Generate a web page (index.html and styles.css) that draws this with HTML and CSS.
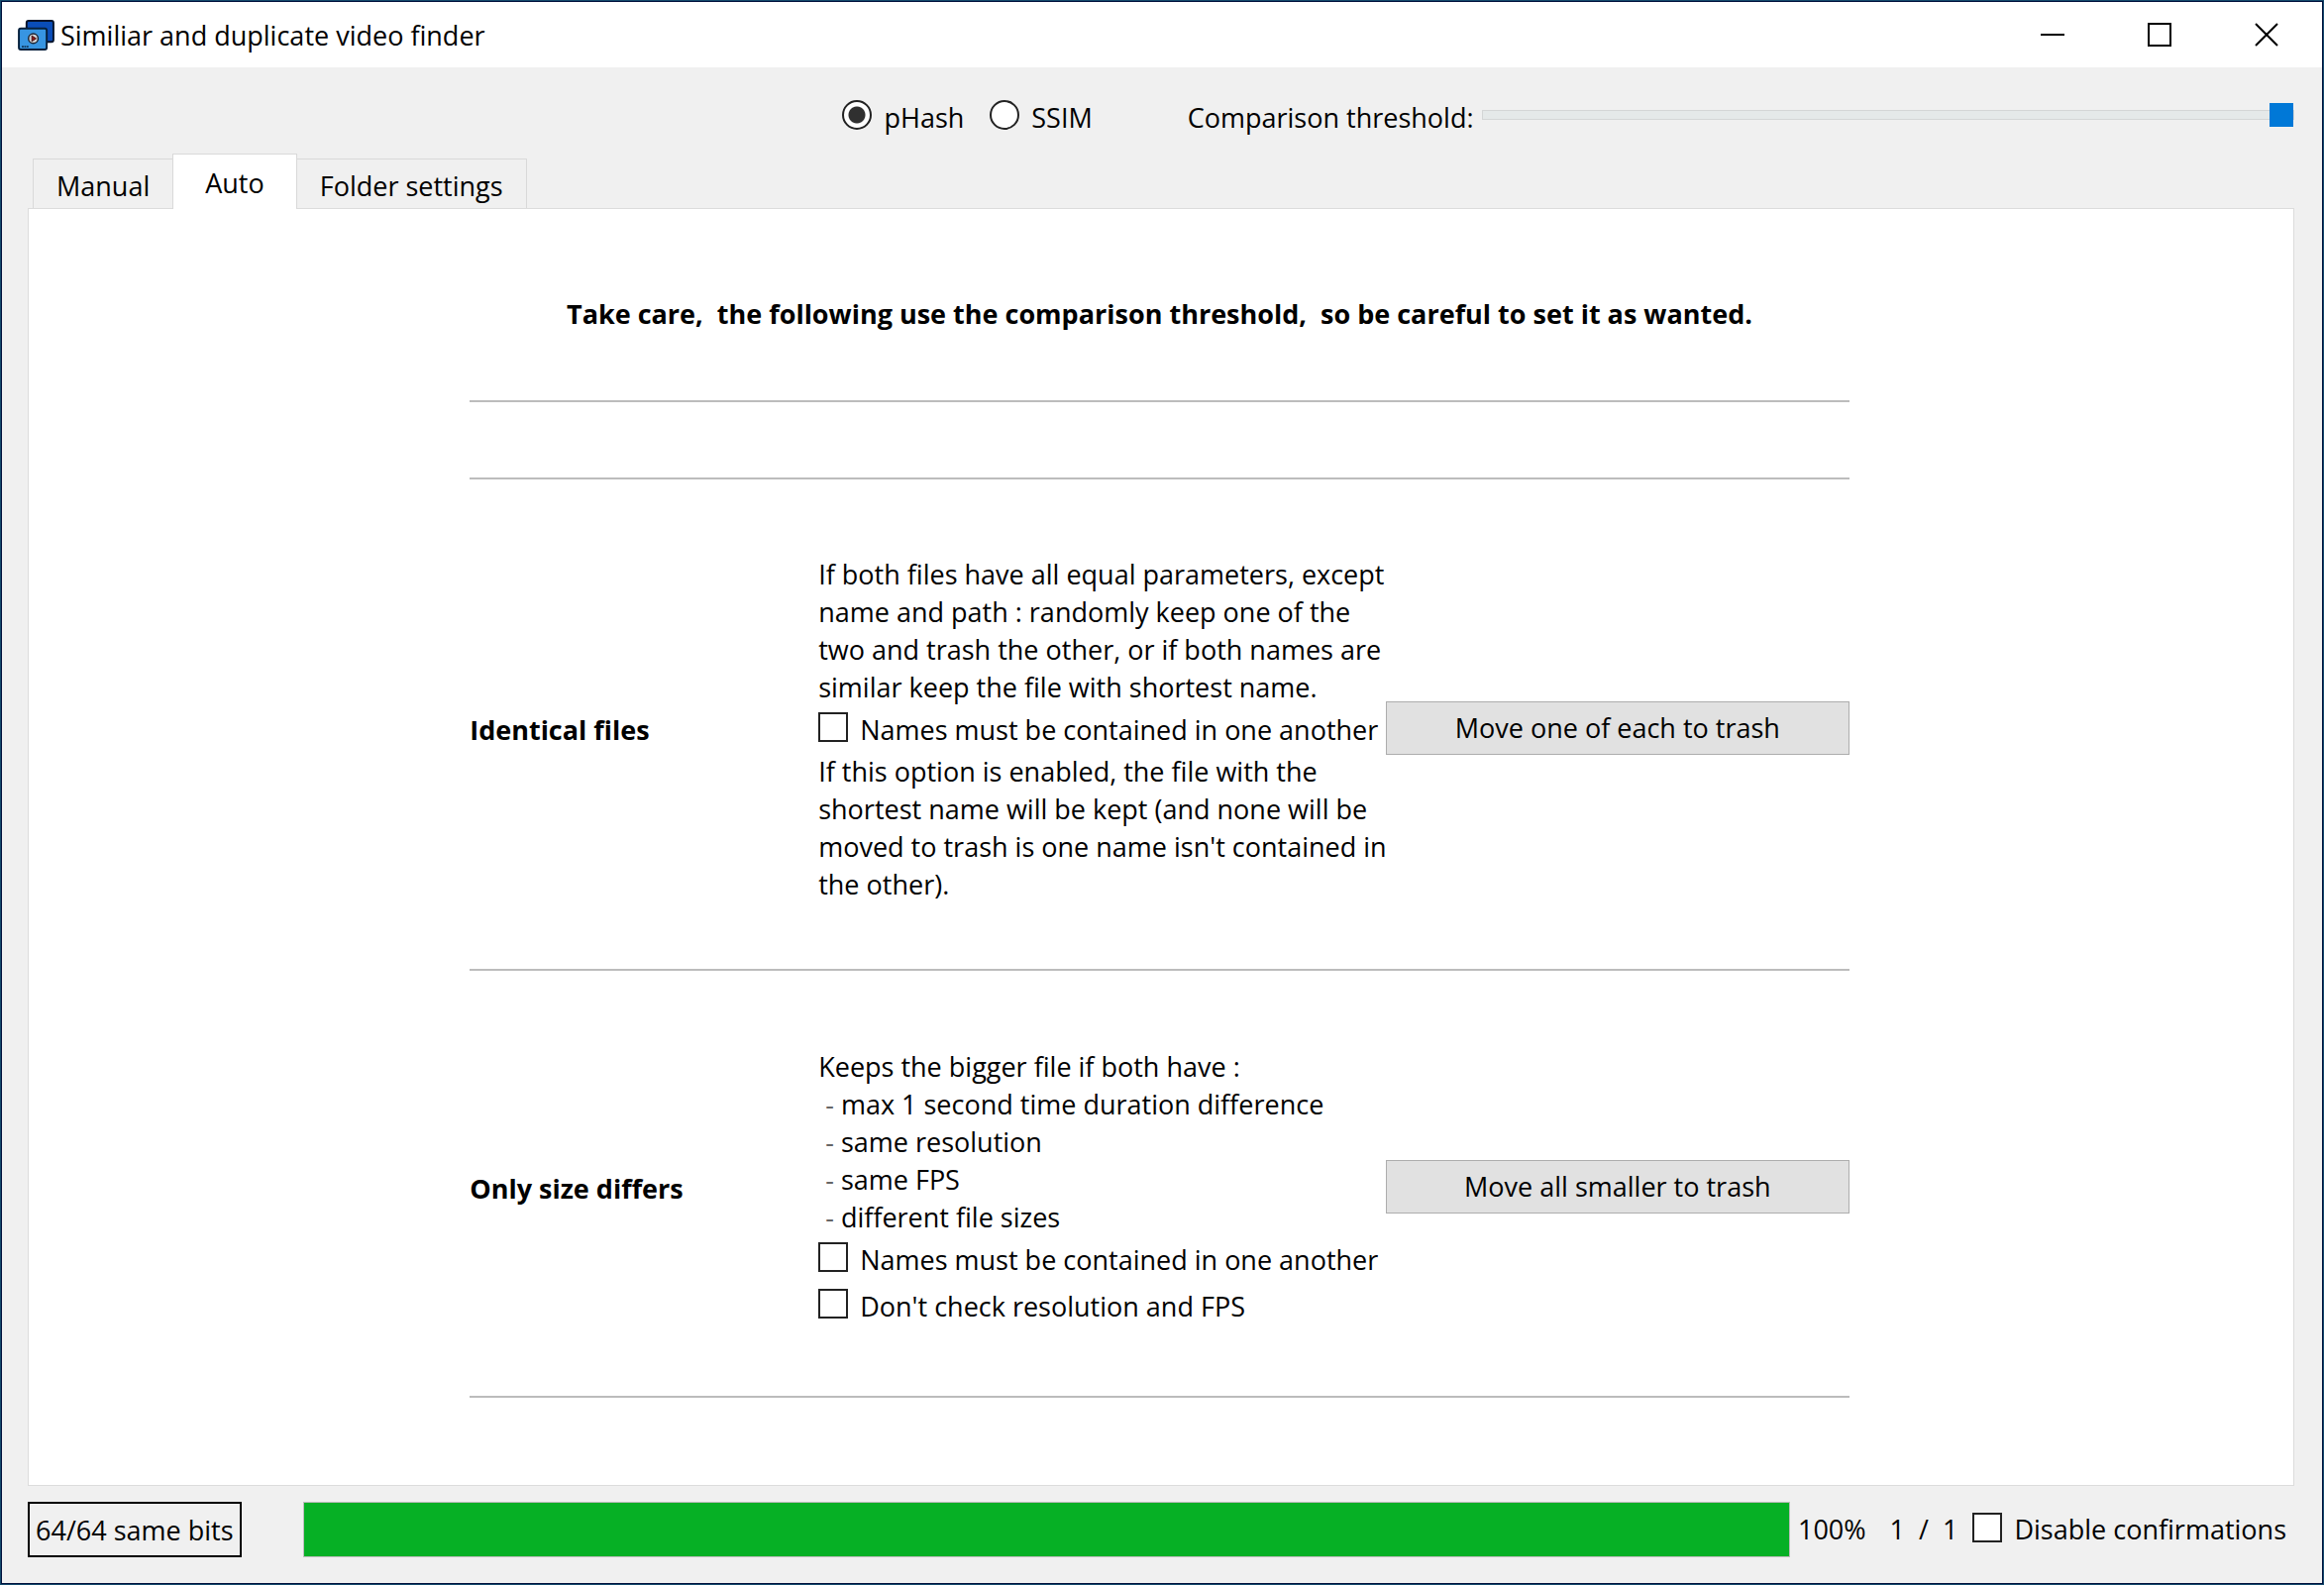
FILE: index.html
```html
<!DOCTYPE html>
<html lang="en">
<head>
<meta charset="utf-8">
<meta name="viewport" content="width=device-width, initial-scale=1">
<title>Similiar and duplicate video finder</title>
<link rel="stylesheet" href="styles.css">
</head>
<body>
<div class="window">
  <header class="titlebar">
    <svg class="app-icon" viewBox="0 0 38 32" aria-hidden="true">
      <rect x="9" y="1" width="28" height="22" rx="2" fill="#0a4db8" stroke="#06142c" stroke-width="2"/>
      <rect x="1" y="9" width="29" height="22" rx="2" fill="#3795e2" stroke="#06203c" stroke-width="2"/>
      <circle cx="16" cy="19.500" r="5" fill="#d4d4d8" stroke="#1c2430" stroke-width="1.5"/>
      <path d="M14.500 16.500v6l4.500-3z" fill="#8c1616" stroke="#301010" stroke-width=".8"/>
      <path d="M4 28h7" stroke="#10375c" stroke-width="2" stroke-dasharray="2 .6"/>
    </svg>
    <h1 class="title">Similiar and duplicate video finder</h1>
    <div class="window-buttons">
      <button class="window-button" type="button" aria-label="Minimize"><svg viewBox="0 0 24 24"><path d="M0 12h24"/></svg></button>
      <button class="window-button" type="button" aria-label="Maximize"><svg viewBox="0 0 24 24"><path d="M1 1h22v22H1z"/></svg></button>
      <button class="window-button" type="button" aria-label="Close"><svg viewBox="0 0 24 24"><path d="M1 1l22 22M23 1L1 23"/></svg></button>
    </div>
  </header>

  <main class="body">
    <div class="controls">
      <div class="modes">
        <label class="choice"><input class="radio" type="radio" name="mode" checked><span>pHash</span></label>
        <label class="choice"><input class="radio" type="radio" name="mode"><span>SSIM</span></label>
      </div>
      <label class="threshold-label" for="threshold">Comparison threshold:</label>
      <input class="slider" id="threshold" type="range" min="0" max="64" value="64">
    </div>

    <div class="tabs" role="tablist">
      <button class="tab" type="button" role="tab">Manual</button>
      <button class="tab tab-active" type="button" role="tab" aria-selected="true">Auto</button>
      <button class="tab" type="button" role="tab">Folder settings</button>
    </div>

    <section class="panel" role="tabpanel">
      <div class="content">
        <p class="notice">Take care,&nbsp; the following use the comparison threshold,&nbsp; so be careful to set it as wanted.</p>
        <div class="spacer"></div>
        <section class="rule">
          <h2 class="rule-name">Identical files</h2>
          <div class="rule-text">
            <p>If both files have all equal parameters, except<br>name and path : randomly keep one of the<br>two and trash the other, or if both names are<br>similar keep the file with shortest name.</p>
            <label class="choice option"><input class="check" type="checkbox"><span>Names must be contained in one another</span></label>
            <p>If this option is enabled, the file with the<br>shortest name will be kept (and none will be<br>moved to trash is one name isn't contained in<br>the other).</p>
          </div>
          <button class="action" type="button">Move one of each to trash</button>
        </section>
        <section class="rule rule-last">
          <h2 class="rule-name">Only size differs</h2>
          <div class="rule-text">
            <p>Keeps the bigger file if both have :</p>
            <ul class="conditions">
              <li>max 1 second time duration difference</li>
              <li>same resolution</li>
              <li>same FPS</li>
              <li>different file sizes</li>
            </ul>
            <label class="choice option"><input class="check" type="checkbox"><span>Names must be contained in one another</span></label>
            <label class="choice option"><input class="check" type="checkbox"><span>Don't check resolution and FPS</span></label>
          </div>
          <button class="action" type="button">Move all smaller to trash</button>
        </section>
      </div>
    </section>

    <footer class="status">
      <div class="bits">64/64 same bits</div>
      <progress class="progress" max="100" value="100" aria-label="Progress"></progress>
      <span class="percent">100%</span>
      <span class="count">1 &nbsp;/ &nbsp;1</span>
      <label class="choice"><input class="check" type="checkbox"><span>Disable confirmations</span></label>
    </footer>
  </main>
</div>
</body>
</html>
```
FILE: styles.css
```css
* {
  box-sizing: border-box;
}

body {
  margin: 0;
  background: #f0f0f0;
  color: #000;
  font: 27px/38px "Open Sans", "Noto Sans", sans-serif;
}

button,
input {
  margin: 0;
  font: inherit;
  color: inherit;
}

h1,
h2,
p,
ul {
  margin: 0;
  padding: 0;
}

.window {
  display: flex;
  flex-direction: column;
  min-height: 100vh;
  border: 1px solid #144a6c;
  outline: 1px solid #00103c;
  outline-offset: -2px;
  padding: 1px;
}

/* Title bar */
.titlebar {
  display: flex;
  align-items: center;
  height: 66px;
  padding-left: 16px;
  background: #fff;
}

.app-icon {
  width: 37px;
  height: 31px;
}

.title {
  flex: 1;
  padding: 2px 0 0 6px;
  font-size: 27px;
  font-weight: 400;
}

.window-buttons {
  display: flex;
  height: 100%;
  padding-right: 2px;
}

.window-button {
  display: flex;
  align-items: center;
  justify-content: center;
  width: 108px;
  border: 0;
  padding: 0;
  background: none;
}

.window-button svg {
  width: 24px;
  height: 24px;
  fill: none;
  stroke: #000;
  stroke-width: 2;
}

/* Controls */
.body {
  flex: 1;
  display: flex;
  flex-direction: column;
  padding: 0 28px 26px 26px;
}

.controls {
  display: grid;
  grid-template-columns: 1fr auto auto 1fr;
  align-items: center;
  height: 87px;
  padding: 14px 0 0 2px;
}

.modes {
  grid-column: 2;
  display: flex;
  gap: 26px;
  padding-right: 96px;
}

.choice {
  display: flex;
  align-items: center;
  gap: 12px;
  white-space: nowrap;
}

.radio,
.check {
  appearance: none;
  flex: none;
  width: 30px;
  height: 30px;
  margin-bottom: 5px;
  border: 2px solid #222;
  background: #fff;
}

.radio {
  border-radius: 50%;
}

.radio:checked {
  background: radial-gradient(circle, #303030 8px, #fff 9px);
}

.threshold-label {
  padding-right: 8px;
}

.slider {
  appearance: none;
  width: 100%;
  height: 26px;
  margin-bottom: 6px;
  background: none;
}

.slider::-webkit-slider-runnable-track {
  height: 10px;
  border: 1px solid #d4d6d6;
  background: #e5e9e9;
}

.slider::-webkit-slider-thumb {
  appearance: none;
  width: 24px;
  height: 24px;
  margin-top: -8px;
  background: #0078d7;
}

/* Tabs */
.tabs {
  display: flex;
  align-items: flex-end;
  padding-left: 5px;
}

.tab {
  height: 50px;
  border: 1px solid #d9d9d9;
  border-width: 1px 0 0 1px;
  padding: 4px 23px 0;
  background: #f0f0f0;
}

.tab:last-child {
  border-right-width: 1px;
}

.tab-active {
  z-index: 1;
  height: 56px;
  margin-bottom: -1px;
  border-right-width: 1px;
  padding: 2px 32px 0;
  background: #fff;
}

.tab-active + .tab {
  border-left-width: 0;
}

.panel {
  flex: 1;
  border: 1px solid #dcdcdc;
  padding-right: 3px;
  background: #fff;
}

.content {
  width: 61%;
  min-width: 1300px;
  margin: 0 auto;
}

.notice {
  padding: 87px 0 68px;
  font-weight: 700;
  text-align: center;
}

.spacer {
  height: 78px;
  border-top: 2px solid #bcbcbc;
}

.rule {
  display: grid;
  grid-template-columns: 352px minmax(0, 1fr) 468px;
  align-items: center;
  border-top: 2px solid #bcbcbc;
  padding: 77px 0 66px;
}

.rule-last {
  border-bottom: 2px solid #bcbcbc;
  padding: 78px 0 67px;
}

.rule-name {
  font-size: 27px;
  font-weight: 700;
}

.rule-text {
  white-space: nowrap;
}

.option {
  height: 47px;
}

.conditions {
  list-style: none;
}

.conditions li::before {
  content: "\00a0- ";
  color: #666;
}

.action {
  height: 54px;
  margin-bottom: 4px;
  border: 1px solid #adadad;
  background: #e1e1e1;
}

/* Status bar */
.status {
  display: flex;
  align-items: center;
  padding: 16px 8px 0 0;
}

.bits {
  height: 56px;
  border: 2px solid #000;
  padding: 8px 6px 0;
  white-space: nowrap;
}

.progress {
  appearance: none;
  flex: 1;
  height: 56px;
  margin-left: 62px;
  border: 1px solid #bcbcbc;
}

.progress::-webkit-progress-bar {
  background: #e6e6e6;
}

.progress::-webkit-progress-value {
  background: #06b025;
}

.percent {
  padding: 0 24px 0 8px;
}

.count {
  padding-right: 15px;
}
```
